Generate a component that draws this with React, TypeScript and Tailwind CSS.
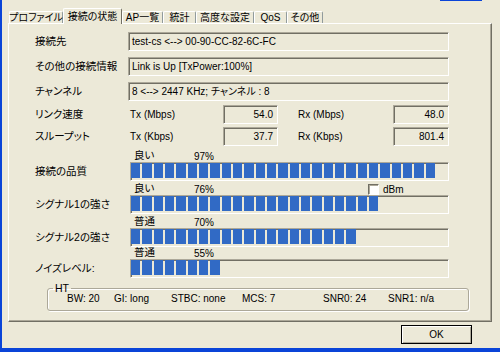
import React from 'react'

const FONT = "font-['Liberation_Sans','Noto_Sans_CJK_JP',sans-serif] [font-feature-settings:'palt']"
const SUNKEN =
  'border border-t-[#ACA899] border-l-[#ACA899] border-b-white border-r-white shadow-[inset_1px_1px_0_#716F64]'

const tabs = [
  { label: 'プロファイル', w: 'w-[54px]' },
  { label: '接続の状態', w: 'w-[59px]', active: true },
  { label: 'AP一覧', w: 'w-[41px]' },
  { label: '統計', w: 'w-[33px]' },
  { label: '高度な設定', w: 'w-[58px]' },
  { label: 'QoS', w: 'w-[33px]' },
  { label: 'その他', w: 'w-[36px]' },
]

const bars = [
  { label: '接続の品質', quality: '良い', pct: '97%', segs: 27, mt: 'mt-[4px]' },
  { label: 'シグナル1の強さ', quality: '良い', pct: '76%', segs: 22, mt: 'mt-[2px]', dbm: true },
  { label: 'シグナル2の強さ', quality: '普通', pct: '70%', segs: 20, mt: 'mt-[2px]' },
  { label: 'ノイズレベル:', quality: '普通', pct: '55%', segs: 8, mt: 'mt-0' },
]

function InfoRow({ label, value, mt }: { label: string; value: string; mt: string }) {
  return (
    <div className={`flex items-center ${mt}`}>
      <div className="w-[93px] whitespace-nowrap text-[10.5px]">{label}</div>
      <div className={`flex h-[19px] w-[321px] items-center pl-[3px] text-[10px] ${SUNKEN}`}>{value}</div>
    </div>
  )
}

function SpeedRow({ label, unit, tx, rx, mt }: { label: string; unit: string; tx: string; rx: string; mt: string }) {
  return (
    <div className={`flex items-center ${mt}`}>
      <div className="w-[93px] text-[10.5px]">{label}</div>
      <div className="w-[95px] pl-[2px] text-[10px]">Tx ({unit})</div>
      <div className={`flex h-[19px] w-[55px] items-center justify-end pr-[4px] text-[10px] ${SUNKEN}`}>{tx}</div>
      <div className="ml-[20px] w-[95px] text-[10px]">Rx ({unit})</div>
      <div className={`flex h-[19px] w-[56px] items-center justify-end pr-[4px] text-[10px] ${SUNKEN}`}>{rx}</div>
    </div>
  )
}

export default function App() {
  return (
    <div className={`relative flex h-[352px] w-[500px] flex-col border-b-4 border-l-2 border-[#0A44D8] bg-[#ECE9D8] text-black ${FONT}`}>
      {/* window frame piece */}
      <div className="absolute left-[438px] top-0 h-[1px] w-[42px] bg-[#0A44D8]" />

      {/* Tabs */}
      <div className="flex h-[23px] items-end pl-[7px]">
        {tabs.map((t) =>
          t.active ? (
            <div
              key={t.label}
              className={`relative z-10 -mb-px flex h-[16px] items-center justify-center whitespace-nowrap rounded-t-[2px] border-l border-r border-t border-l-white border-r-[#716F64] border-t-white bg-[#ECE9D8] pb-[1px] text-[10px] ${t.w}`}
            >
              {t.label}
            </div>
          ) : (
            <div
              key={t.label}
              className={`flex h-[12px] items-center justify-center whitespace-nowrap rounded-t-[2px] border-l border-r border-t border-l-white border-r-[#919B9C] border-t-white text-[10px] ${t.w}`}
            >
              {t.label}
            </div>
          )
        )}
      </div>

      {/* Panel */}
      <div className="ml-[6px] h-[299px] w-[484px] border border-b-[#716F64] border-l-white border-r-[#716F64] border-t-white pl-[26px] pt-[8px] shadow-[inset_-1px_-1px_0_#ACA899]">
        <InfoRow label="接続先" value="test-cs <--> 00-90-CC-82-6C-FC" mt="mt-0" />
        <InfoRow label="その他の接続情報" value="Link is Up [TxPower:100%]" mt="mt-[6px]" />
        <InfoRow label="チャンネル" value="8 <--> 2447 KHz; チャンネル : 8" mt="mt-[6px]" />
        <SpeedRow label="リンク速度" unit="Mbps" tx="54.0" rx="48.0" mt="mt-[4px]" />
        <SpeedRow label="スループット" unit="Kbps" tx="37.7" rx="801.4" mt="mt-[3px]" />

        {bars.map((b) => (
          <div key={b.label} className={b.mt}>
            <div className="ml-[99px] flex h-[12px] items-center text-[10px]">
              <span className="w-[60px] text-[10.5px]">{b.quality}</span>
              <span className="w-[174px]">{b.pct}</span>
              {b.dbm && (
                <span className="flex items-center gap-[4px]">
                  <span className="h-[11px] w-[11px] border border-b-white border-l-[#716F64] border-r-white border-t-[#716F64] bg-white shadow-[inset_1px_1px_0_#ACA899]" />
                  dBm
                </span>
              )}
            </div>
            <div className="flex items-center">
              <div className="w-[95px] whitespace-nowrap text-[10.5px]">{b.label}</div>
              <div className={`flex h-[19px] w-[319px] gap-[2px] ${SUNKEN}`}>
                {Array.from({ length: b.segs }).map((_, i) => (
                  <div key={i} className="h-[15px] w-[9.33px] shrink-0 bg-[#316AC5]" />
                ))}
              </div>
            </div>
          </div>
        ))}

        {/* HT group */}
        <fieldset className="ml-[12px] mt-[4px] w-[422px] rounded-[3px] border border-[#ACA899] shadow-[inset_1px_1px_0_#fff,1px_1px_0_#fff]">
          <legend className="ml-[5px] px-[2px] text-[10.5px] leading-[12px]">HT</legend>
          <div className="-mt-[2px] flex h-[12px] items-center pl-[19px] text-[10px]">
            <span className="w-[47px]">BW: 20</span>
            <span className="w-[57px]">GI: long</span>
            <span className="w-[71px]">STBC: none</span>
            <span className="w-[81px]">MCS: 7</span>
            <span className="w-[65px]">SNR0: 24</span>
            <span>SNR1: n/a</span>
          </div>
          <div className="h-[6px]" />
        </fieldset>
      </div>

      {/* Footer */}
      <div className="flex justify-end pr-[28px] pt-[3px]">
        <button className="flex h-[19px] w-[71px] items-center justify-center border border-black text-[10px] shadow-[inset_1px_1px_0_#fff,inset_-1px_-1px_0_#ACA899]">
          OK
        </button>
      </div>
    </div>
  )
}
